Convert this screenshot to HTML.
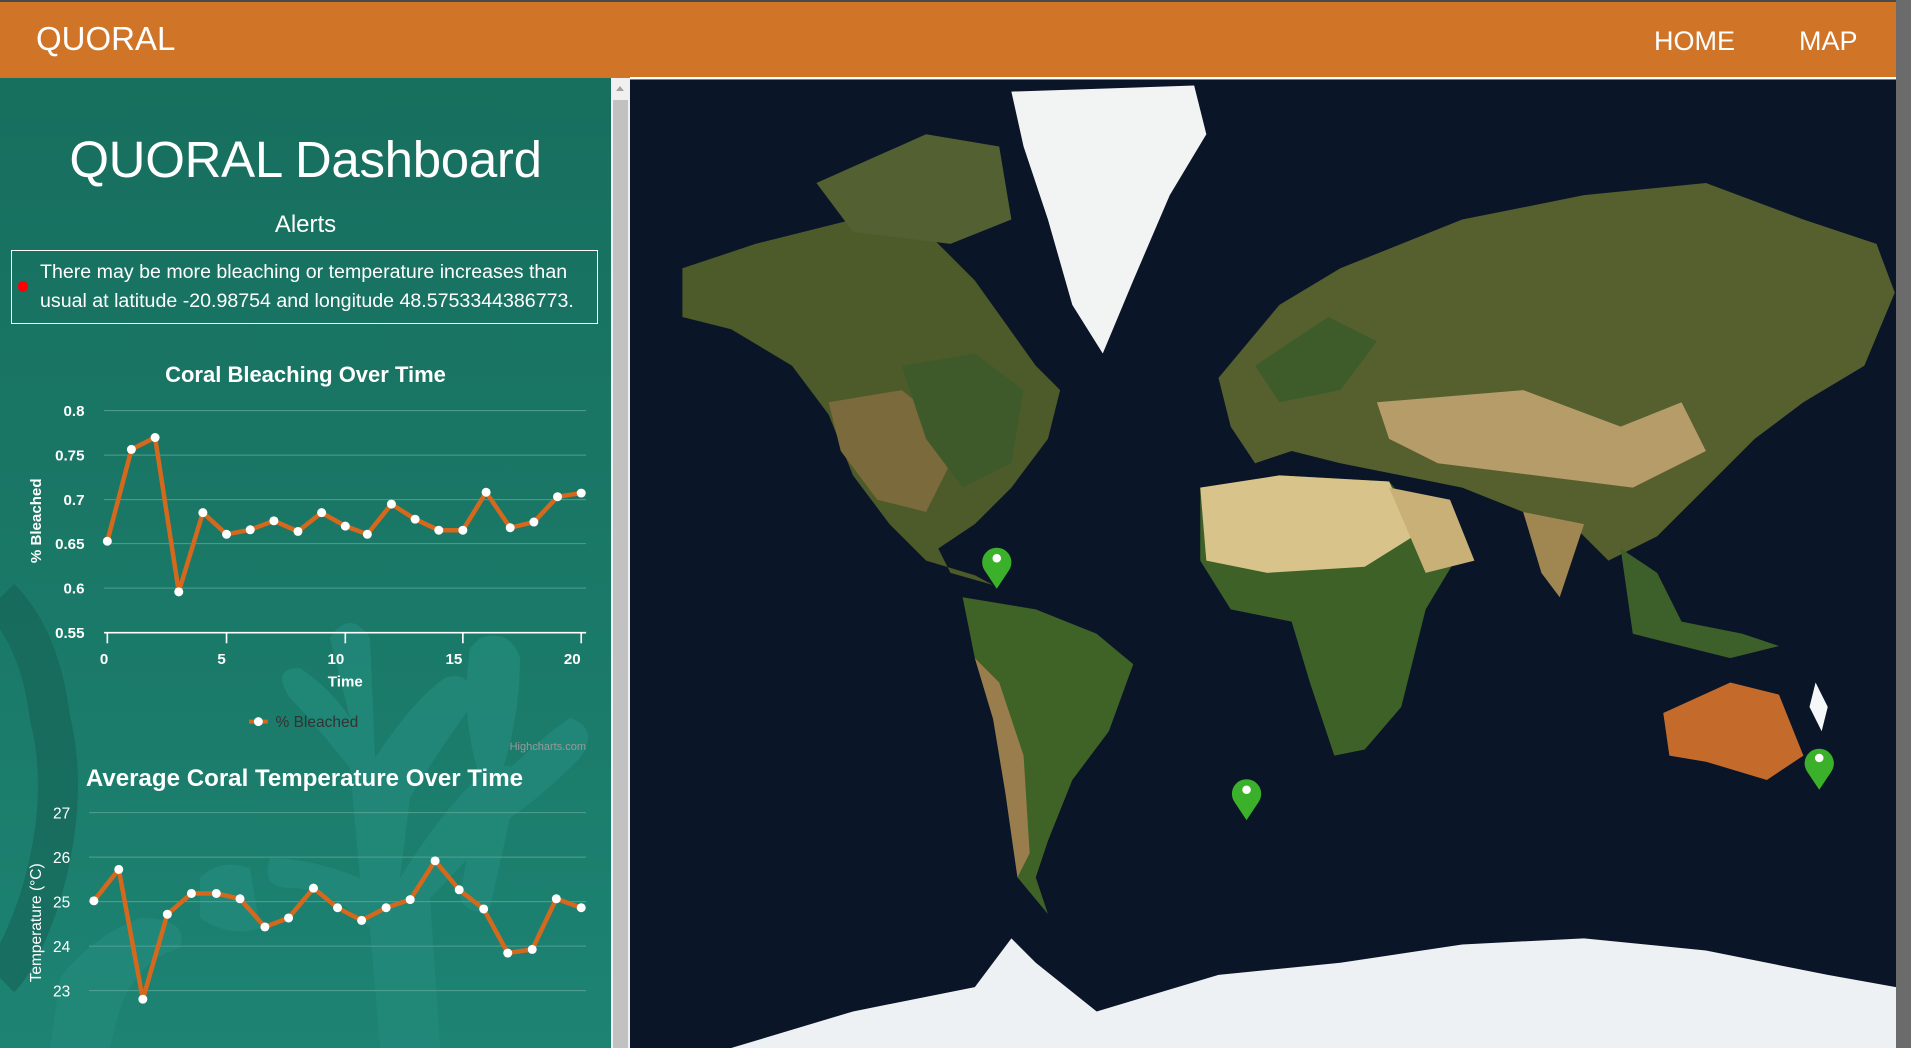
<!DOCTYPE html>
<html><head><meta charset="utf-8">
<style>
*{margin:0;padding:0;box-sizing:border-box}
html,body{width:1911px;height:1048px;overflow:hidden;background:#0a1322;font-family:"Liberation Sans",sans-serif}
#hdr{position:absolute;left:0;top:0;width:1898px;height:78px;background:#d07428;border-top:2px solid #4a4a4a}
#hdr .logo{position:absolute;left:36px;top:18px;color:#fff;font-size:33px}
#hdr .nav{position:absolute;top:24px;color:#fff;font-size:27px}
#left{position:absolute;left:0;top:78px;width:611px;height:970px;background:linear-gradient(180deg,#176f5e 0%,#1a7867 50%,#1d8373 100%);overflow:hidden}
#lsb{position:absolute;left:611px;top:78px;width:19px;height:970px;background:#f0f0f0}
#lsb .th{position:absolute;left:2px;top:22px;width:15px;height:948px;background:#c1c1c1}
#lsb .ar{position:absolute;left:5px;top:8px;width:0;height:0;border-left:4px solid transparent;border-right:4px solid transparent;border-bottom:5px solid #a3a3a3}
#map{position:absolute;left:630px;top:77px;width:1266px;height:971px}
#rsb{position:absolute;left:1896px;top:0;width:15px;height:1048px;background:#6b6b6b}
h1{position:absolute;left:0;width:611px;top:130px;text-align:center;color:#fff;font-weight:normal;font-size:51px;letter-spacing:-0.3px}
.alerts{position:absolute;left:0;width:611px;top:211px;text-align:center;color:#fff;font-size:24px}
.box{position:absolute;left:11px;top:250px;width:587px;height:74px;border:1px solid #fff}
.box p{position:absolute;left:28px;top:7px;color:#fff;font-size:19.6px;line-height:29px;white-space:nowrap}
.dot{position:absolute;left:18px;top:281px;width:10px;height:11px;border-radius:50%;background:#f00}
.t1{position:absolute;left:0;width:611px;top:362px;text-align:center;color:#fff;font-weight:bold;font-size:22px}
</style></head><body>
<div id="hdr"><span class="logo">QUORAL</span><span class="nav" style="left:1654px">HOME</span><span class="nav" style="left:1799px">MAP</span></div>

<div id="left">
<svg width="611" height="970" style="position:absolute;left:0;top:0">
<g fill="#238a7b" opacity="0.75">
<path d="M330 560 q20-30 40 0 l5 120 q40-60 70-80 q30-10 25 30 q-30 40-60 90 l-10 80 q50-80 90-110 q30-10 30 20 q-20 40-90 110 l10 150 h-60 l-10-120 q-40-40-80-40 q-30 0-20-30 q40 0 90 20 l-10-110 q-40-50-60-70 q-20-30 10-30 q30 20 50 50 z"/>
<path d="M480 560 q30-10 40 20 q0 60-20 120 q40-40 70-60 q30 10 10 40 q-40 40-70 60 l-20 90 q-20 10-30-10 l20-120 q-20-60-10-130z"/>
<path d="M60 900 q30-40 80-60 q50 0 40 30 q-40 10-60 60 l-10 40 h-60 z"/>
<path d="M200 800 q20-20 50-10 l10 60 q-30 10-60-10z"/>
</g>
<path d="M0 520 q40 40 50 120 q20 80 -10 180 q-20 60 -40 80" fill="none" stroke="#166355" stroke-width="40" opacity="0.6"/>
</svg>
</div>
<h1>QUORAL Dashboard</h1>
<div class="alerts">Alerts</div>
<div class="box"><p>There may be more bleaching or temperature increases than<br>usual at latitude -20.98754 and longitude 48.5753344386773.</p></div>
<div class="dot"></div>
<div class="t1">Coral Bleaching Over Time</div>

<svg style="position:absolute;left:0;top:380px" width="640" height="668" viewBox="0 0 1568 1636.6">
<g stroke="#5fa89a" stroke-width="2.5" opacity="0.8">
<line x1="255" y1="75" x2="1436" y2="75"/><line x1="255" y1="184" x2="1436" y2="184"/><line x1="255" y1="293" x2="1436" y2="293"/><line x1="255" y1="401" x2="1436" y2="401"/><line x1="255" y1="510" x2="1436" y2="510"/>
<line x1="218" y1="1060" x2="1436" y2="1060"/><line x1="218" y1="1169" x2="1436" y2="1169"/><line x1="218" y1="1278" x2="1436" y2="1278"/><line x1="218" y1="1387" x2="1436" y2="1387"/><line x1="218" y1="1496" x2="1436" y2="1496"/>
</g>
<g stroke="#fff" stroke-width="4">
<line x1="255" y1="619" x2="1436" y2="619"/>
<line x1="263" y1="619" x2="263" y2="645"/><line x1="555" y1="619" x2="555" y2="645"/><line x1="846" y1="619" x2="846" y2="645"/><line x1="1134" y1="619" x2="1134" y2="645"/><line x1="1424" y1="619" x2="1424" y2="645"/>
</g>
<g fill="#fff" font-family="Liberation Sans,sans-serif" font-weight="bold" font-size="37" text-anchor="end">
<text x="207" y="88">0.8</text><text x="207" y="197">0.75</text><text x="207" y="306">0.7</text><text x="207" y="414">0.65</text><text x="207" y="523">0.6</text><text x="207" y="632">0.55</text>
</g>
<g fill="#fff" font-family="Liberation Sans,sans-serif" font-weight="bold" font-size="37" text-anchor="middle">
<text x="255" y="696">0</text><text x="543" y="696">5</text><text x="823" y="696">10</text><text x="1112" y="696">15</text><text x="1402" y="696">20</text>
<text x="846" y="751">Time</text>
<text transform="translate(100,345) rotate(-90)">% Bleached</text>
<text transform="translate(100,1330) rotate(-90)" font-weight="normal" font-size="38">Temperature (°C)</text>
<text x="746" y="995" font-size="59">Average Coral Temperature Over Time</text>
</g>
<g fill="#fff" font-family="Liberation Sans,sans-serif" font-size="38" text-anchor="end">
<text x="172" y="1074">27</text><text x="172" y="1183">26</text><text x="172" y="1292">25</text><text x="172" y="1401">24</text><text x="172" y="1510">23</text>
</g>
<polyline fill="none" stroke="#d4691d" stroke-width="11" stroke-linejoin="round" points="263,395 322,170 380,141 438,519 497,325 555,378 613,367 671,345 730,371 788,325 846,358 900,378 959,304 1017,341 1075,368 1134,368 1191,275 1250,362 1308,348 1366,286 1424,277"/>
<g fill="#fff">
<circle cx="263" cy="395" r="11"/><circle cx="322" cy="170" r="11"/><circle cx="380" cy="141" r="11"/><circle cx="438" cy="519" r="11"/><circle cx="497" cy="325" r="11"/><circle cx="555" cy="378" r="11"/><circle cx="613" cy="367" r="11"/><circle cx="671" cy="345" r="11"/><circle cx="730" cy="371" r="11"/><circle cx="788" cy="325" r="11"/><circle cx="846" cy="358" r="11"/><circle cx="900" cy="378" r="11"/><circle cx="959" cy="304" r="11"/><circle cx="1017" cy="341" r="11"/><circle cx="1075" cy="368" r="11"/><circle cx="1134" cy="368" r="11"/><circle cx="1191" cy="275" r="11"/><circle cx="1250" cy="362" r="11"/><circle cx="1308" cy="348" r="11"/><circle cx="1366" cy="286" r="11"/><circle cx="1424" cy="277" r="11"/>
</g>
<line x1="610" y1="837" x2="656" y2="837" stroke="#d4691d" stroke-width="10"/>
<circle cx="633" cy="837" r="11" fill="#fff"/>
<text x="675" y="850" fill="#333" font-family="Liberation Sans,sans-serif" font-size="38">% Bleached</text>
<text x="1436" y="907" fill="#999" font-family="Liberation Sans,sans-serif" font-size="27" text-anchor="end">Highcharts.com</text>
<polyline fill="none" stroke="#d4691d" stroke-width="11" stroke-linejoin="round" points="230,1276 291,1199 350,1517 410,1309 469,1258 530,1258 588,1271 649,1340 707,1318 768,1245 827,1293 886,1324 946,1293 1005,1273 1066,1178 1125,1249 1185,1296 1244,1404 1304,1395 1363,1271 1424,1293"/>
<g fill="#fff">
<circle cx="230" cy="1276" r="11"/><circle cx="291" cy="1199" r="11"/><circle cx="350" cy="1517" r="11"/><circle cx="410" cy="1309" r="11"/><circle cx="469" cy="1258" r="11"/><circle cx="530" cy="1258" r="11"/><circle cx="588" cy="1271" r="11"/><circle cx="649" cy="1340" r="11"/><circle cx="707" cy="1318" r="11"/><circle cx="768" cy="1245" r="11"/><circle cx="827" cy="1293" r="11"/><circle cx="886" cy="1324" r="11"/><circle cx="946" cy="1293" r="11"/><circle cx="1005" cy="1273" r="11"/><circle cx="1066" cy="1178" r="11"/><circle cx="1125" cy="1249" r="11"/><circle cx="1185" cy="1296" r="11"/><circle cx="1244" cy="1404" r="11"/><circle cx="1304" cy="1395" r="11"/><circle cx="1363" cy="1271" r="11"/><circle cx="1424" cy="1293" r="11"/>
</g>
</svg>

<div id="lsb"><div class="ar"></div><div class="th"></div></div>

<svg id="map" viewBox="517 63 1039 797" preserveAspectRatio="none">
<rect x="517" y="63" width="1039" height="797" fill="#0b1528"/>
<rect x="517" y="63" width="1039" height="2" fill="#fff"/>
<polygon fill="#4d5a2a" points="560,220 620,200 700,180 760,190 800,230 850,300 870,320 860,360 830,400 800,430 770,450 780,470 815,480 800,472 760,460 730,430 700,390 680,340 650,300 600,270 560,260"/>
<polygon fill="#7a6a3c" points="680,330 740,320 790,360 760,420 720,410 690,370"/>
<polygon fill="#536032" points="670,150 760,110 820,120 830,180 780,200 700,190"/>
<polygon fill="#3f5a2a" points="740,300 800,290 840,320 830,380 790,400 760,360"/>
<polygon fill="#f2f4f4" points="830,75 980,70 990,110 960,160 930,230 905,290 880,250 860,180 840,120"/>
<polygon fill="#3f6327" points="790,490 850,500 900,520 930,545 910,600 880,640 860,690 850,720 860,750 835,720 825,650 815,590 800,540"/>
<polygon fill="#9a7d4c" points="800,540 815,590 825,650 835,720 845,700 840,620 820,560"/>
<polygon fill="#56602e" points="1000,310 1050,250 1100,220 1200,180 1300,160 1400,150 1480,180 1540,200 1555,240 1530,300 1480,330 1440,360 1400,400 1360,440 1320,460 1290,430 1250,420 1200,400 1150,390 1100,380 1060,370 1030,380 1010,350"/>
<polygon fill="#b69c68" points="1130,330 1250,320 1330,350 1380,330 1400,370 1340,400 1260,390 1180,380 1140,360"/>
<polygon fill="#3d5c2a" points="1030,300 1090,260 1130,280 1100,320 1050,330"/>
<polygon fill="#3e6128" points="985,400 1050,390 1140,395 1170,430 1200,450 1170,500 1160,540 1150,580 1120,615 1095,620 1075,560 1060,510 1010,500 985,460"/>
<polygon fill="#d8c48a" points="985,400 1050,390 1140,395 1160,440 1120,465 1040,470 990,460"/>
<polygon fill="#c9b077" points="1140,400 1190,410 1210,460 1170,470"/>
<polygon fill="#a08650" points="1250,420 1300,430 1280,490 1265,470"/>
<polygon fill="#3d5f2a" points="1330,450 1360,470 1380,510 1430,520 1460,530 1420,540 1340,520"/>
<polygon fill="#c46b2c" points="1365,585 1420,560 1460,570 1480,620 1450,640 1400,625 1370,620"/>
<polygon fill="#f5f7f8" points="1490,560 1500,580 1495,600 1485,580"/>
<polygon fill="#eef1f3" points="600,860 700,830 800,810 830,770 850,790 900,830 1000,800 1100,790 1200,775 1300,770 1400,780 1500,800 1556,810 1556,860"/>
<g fill="#3bb02a">
<path d="M818 483 L808 468 A12 12 0 1 1 828 468 Z"/>
<path d="M1023 673 L1013 658 A12 12 0 1 1 1033 658 Z"/>
<path d="M1493 648 L1483 633 A12 12 0 1 1 1503 633 Z"/>
</g>
<g fill="#fff"><circle cx="818" cy="458" r="3.5"/><circle cx="1023" cy="648" r="3.5"/><circle cx="1493" cy="622" r="3.5"/></g>
</svg>
<div id="rsb"></div>
</body></html>
